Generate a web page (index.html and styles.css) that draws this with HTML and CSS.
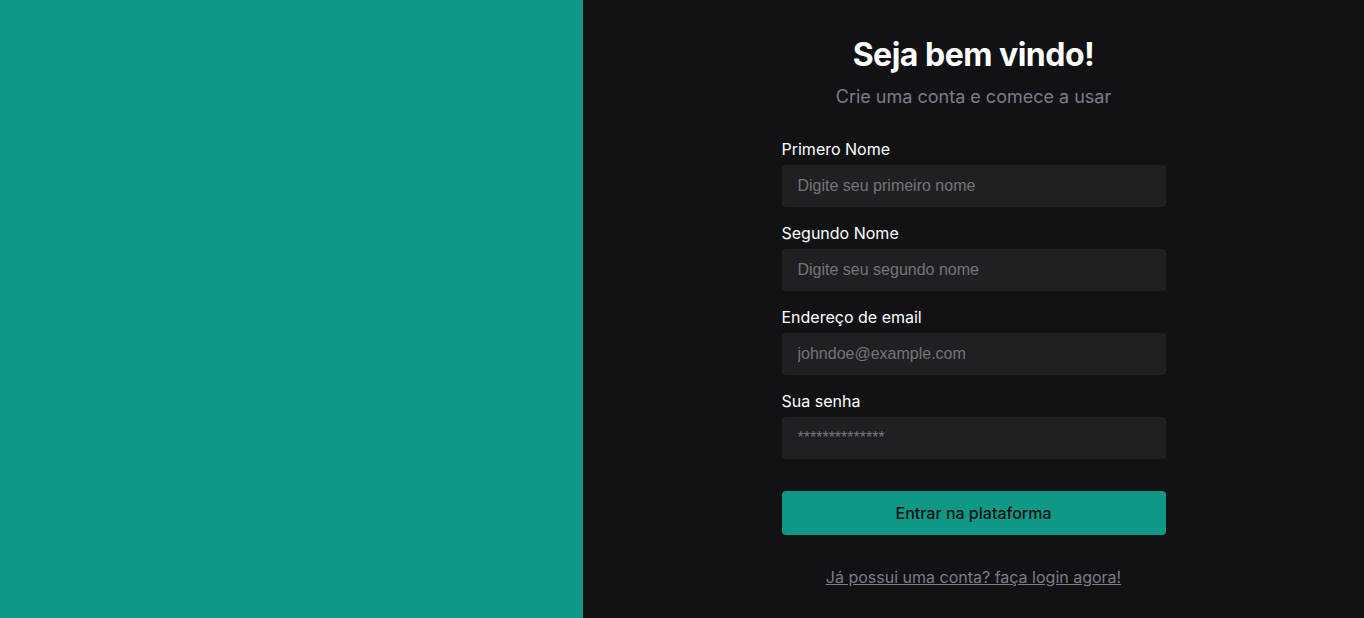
FILE: index.html
```html
<!DOCTYPE html>
<html lang="pt-BR">
<head>
<meta charset="utf-8">
<title>Cadastro</title>
<link rel="stylesheet" href="styles.css">
</head>
<body>
<div class="page">
  <aside class="side"></aside>
  <main class="main">
    <div class="form-wrap">
      <h1 class="title">Seja bem vindo!</h1>
      <p class="subtitle">Crie uma conta e comece a usar</p>
      <form class="form">
        <label class="field">
          <span class="label">Primero Nome</span>
          <input class="input" type="text" placeholder="Digite seu primeiro nome">
        </label>
        <label class="field">
          <span class="label">Segundo Nome</span>
          <input class="input" type="text" placeholder="Digite seu segundo nome">
        </label>
        <label class="field">
          <span class="label">Endereço de email</span>
          <input class="input" type="email" placeholder="johndoe@example.com">
        </label>
        <label class="field">
          <span class="label">Sua senha</span>
          <input class="input" type="password" placeholder="**************">
        </label>
        <button class="button" type="button">Entrar na plataforma</button>
      </form>
      <a class="link" href="#">Já possui uma conta? faça login agora!</a>
    </div>
  </main>
</div>
</body>
</html>
```

FILE: styles.css
```css
* { box-sizing: border-box; }
html, body { margin: 0; padding: 0; height: 100%; }
body {
  font-family: Inter, "Liberation Sans", sans-serif;
  background: #121214;
  color: #e1e1e6;
}
.page {
  display: flex;
  height: 618px;
}
.side {
  width: 583px;
  flex-shrink: 0;
  background: #0f9886;
}
.main {
  flex: 1;
  display: flex;
  justify-content: center;
  background: #121214;
}
.form-wrap {
  width: 384px;
  display: flex;
  flex-direction: column;
  align-items: center;
  padding-top: 35px;
}
.title {
  margin: 0;
  font-size: 32px;
  font-weight: 700;
  letter-spacing: -0.5px;
  line-height: 40px;
  color: #ffffff;
}
.subtitle {
  margin: 8px 0 0;
  font-size: 18px;
  line-height: 28px;
  color: #7c7c8a;
}
.form {
  width: 100%;
  display: flex;
  flex-direction: column;
  gap: 14px;
  margin-top: 26px;
}
.field {
  display: flex;
  flex-direction: column;
  gap: 4px;
}
.label {
  font-size: 16px;
  line-height: 24px;
  color: #ffffff;
}
.input {
  height: 42px;
  border: none;
  border-radius: 4px;
  background: #202024;
  padding: 0 16px;
  font-family: "Liberation Sans", Arial, sans-serif;
  font-size: 16px;
  color: #e1e1e6;
  outline: none;
}
.input::placeholder { color: #757575; }
.button {
  margin-top: 18px;
  height: 44px;
  border: none;
  border-radius: 4px;
  background: #0f9886;
  font-family: Inter, "Liberation Sans", sans-serif;
  font-size: 16px;
  font-weight: 500;
  color: #121214;
  cursor: pointer;
}
.link {
  margin-top: 30px;
  font-size: 16px;
  line-height: 24px;
  color: #7c7c8a;
  text-decoration: underline;
}
```
